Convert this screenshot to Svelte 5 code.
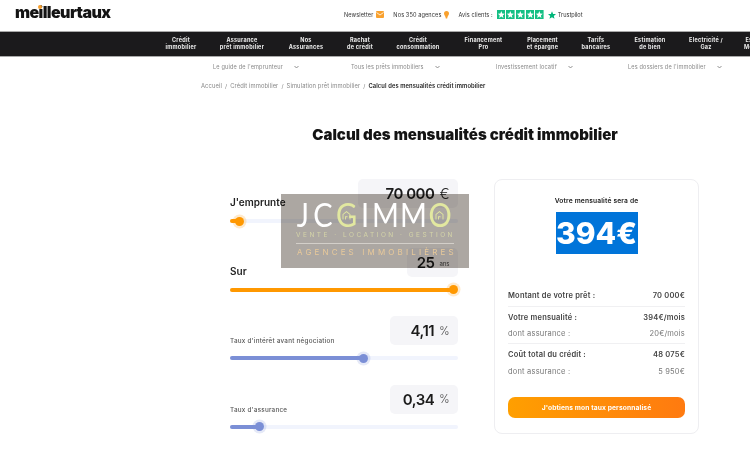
<script>
  const nav = [
    ['Crédit', 'immobilier', 62],
    ['Assurance', 'prêt immobilier', 60],
    ['Nos', 'Assurances', 68],
    ['Rachat', 'de crédit', 40],
    ['Crédit', 'consommation', 76],
    ['Financement', 'Pro', 55],
    ['Placement', 'et épargne', 63],
    ['Tarifs', 'bancaires', 44],
    ['Estimation', 'de bien', 64],
    ['Electricité /', 'Gaz', 48],
    ['Espace', 'Membre', 52]
  ];
  const subnav = ['Le guide de l\'emprunteur', 'Tous les prêts immobiliers', 'Investissement locatif', 'Les dossiers de l\'immobilier'];
  const crumbs = ['Accueil', 'Crédit immobilier', 'Simulation prêt immobilier'];
  const sliders = [
    { label: "J'emprunte", value: '70 000', unit: '€', pct: 4, big: true, color: '#ff9800', vw: 100 },
    { label: 'Sur', value: '25', unit: 'ans', pct: 98, big: true, color: '#ff9800', vw: 51 },
    { label: "Taux d'intérêt avant négociation", value: '4,11', unit: '%', pct: 58.5, big: false, color: '#7b8fd6', vw: 68 },
    { label: "Taux d'assurance", value: '0,34', unit: '%', pct: 13, big: false, color: '#7b8fd6', vw: 68 }
  ];
  const star = 'M5 1.2 6.100 3.900 9 4.100 6.800 6 7.500 8.800 5 7.300 2.500 8.800 3.200 6 1 4.100 3.900 3.900z';
</script>

<header class="top">
  <div class="logo">meilleurtaux<i></i></div>
  <div class="top-links">
    <span class="tl tl1">Newsletter
      <svg width="8" height="7" viewBox="0 0 8 7"><rect width="8" height="7" rx="1" fill="#f9a12e"/><path d="M0.500 1.500 4 4l3.500-2.500" fill="none" stroke="#fff" stroke-width=".8"/></svg>
    </span>
    <span class="tl tl2">Nos 350 agences
      <svg width="5" height="8" viewBox="0 0 5 8"><path d="M2.500 0a2.500 2.500 0 0 1 2.500 2.500C5 4 3.300 5.500 3.200 7.500H1.800C1.700 5.500 0 4 0 2.500A2.500 2.500 0 0 1 2.500 0z" fill="#f9a12e"/></svg>
    </span>
    <span class="tl tl3">Avis clients :</span>
    <span class="stars">
      {#each [1, 2, 3, 4, 5] as s (s)}
        <svg width="8.600" height="9" viewBox="0 0 10 10" preserveAspectRatio="none"><rect width="10" height="10" fill="#14bf84"/><path d={star} fill="#fff"/></svg>
      {/each}
    </span>
    <span class="tp">
      <svg width="8" height="8" viewBox="1 1 8 8"><path d={star} fill="#00b67a"/></svg>
      Trustpilot
    </span>
  </div>
</header>

<nav class="main-nav">
  {#each nav as item (item[0] + item[1])}
    <a href="#top" style="width:{item[2]}px">{item[0]}<br />{item[1]}</a>
  {/each}
</nav>

<div class="subnav">
  {#each subnav as s (s)}
    <span class="sub">{s}
      <svg width="5" height="4" viewBox="0 0 5 4"><path d="M.5 1 2.500 3 4.500 1" fill="none" stroke="#777" stroke-width=".8"/></svg>
    </span>
  {/each}
</div>

<div class="crumbs">
  {#each crumbs as c (c)}
    <span>{c}</span><span class="sep">/</span>
  {/each}
  <strong>Calcul des mensualités crédit immobilier</strong>
</div>

<h1>Calcul des mensualités crédit immobilier</h1>

<main class="calc">
  <section class="sliders">
    {#each sliders as s (s.label)}
      <div class="field">
        <div class="field-top">
          <span class="label" class:big={s.big}>{s.label}</span>
          <span class="value" style="width:{s.vw}px">
            <b>{s.value}</b><small class:ans={s.unit === 'ans'} class:eur={s.unit === '€'}>{s.unit}</small>
          </span>
        </div>
        <div class="track">
          <div class="fill" style="width:{s.pct}%;background:{s.color}"></div>
          <div class="thumb" style="left:{s.pct}%;background:{s.color};box-shadow:0 0 0 2.500px {s.color}33"></div>
        </div>
      </div>
    {/each}
  </section>

  <aside class="card">
    <p class="card-title">Votre mensualité sera de</p>
    <div class="amount">394€</div>
    <div class="rows">
      <div class="row strong r1"><span>Montant de votre prêt :</span><span>70 000€</span></div>
      <div class="row strong r2"><span>Votre mensualité :</span><span>394€/mois</span></div>
      <div class="row r3"><span>dont assurance :</span><span>20€/mois</span></div>
      <div class="row strong r4"><span>Coût total du crédit :</span><span>48 075€</span></div>
      <div class="row r5"><span>dont assurance :</span><span>5 950€</span></div>
    </div>
    <button class="cta">J'obtiens mon taux personnalisé</button>
  </aside>
</main>

<div class="watermark">
  <div class="wm-bg"></div>
  <div class="wm-logo">
    <span class="c-j">J</span><span class="c-c">C</span>
    <span class="lime c-g">G<svg width="11" height="11" viewBox="0 0 11 11"><path d="M2 9V4.500L5.500 2 9 4.500V9M4.500 9V6.500H6.500" fill="none" stroke="#e2e8a0" stroke-width=".9"/></svg></span>
    <span class="c-i">I</span><span class="c-m">M</span><span class="c-m">M</span>
    <span class="lime c-o">O<svg width="11" height="11" viewBox="0 0 11 11"><path d="M2 9V4.500L5.500 2 9 4.500V9M4.500 9V6.500H6.500" fill="none" stroke="#e2e8a0" stroke-width=".9"/></svg></span>
  </div>
  <div class="wm-sub">VENTE · LOCATION · GESTION</div>
  <div class="wm-ag">AGENCES IMMOBILIÈRES</div>
</div>

<style>
  :global(body) {
    margin: 0;
    background: #fff;
    font-family: Inter, "Open Sans", sans-serif;
    color: #111;
    overflow: hidden;
  }

  .top {
    height: 31px;
    position: relative;
  }

  .logo {
    position: absolute;
    left: 15px;
    top: 1px;
    font-size: 16px;
    line-height: 22px;
    font-weight: 900;
    letter-spacing: -0.6px;
    color: #141414;
  }

  .logo i {
    position: absolute;
    left: 23px;
    top: 4px;
    width: 4px;
    height: 4px;
    border-radius: 50%;
    background: #f9a12e;
  }

  .top-links {
    position: absolute;
    left: 344px;
    top: 8.500px;
    display: flex;
    align-items: center;
    font-size: 5.600px;
    letter-spacing: 0.1px;
    line-height: 12px;
    color: #333;
    white-space: nowrap;
  }

  .tl {
    display: flex;
    align-items: center;
    gap: 3px;
  }

  .tl2 { margin-left: 9px; }
  .tl3 { margin-left: 9px; }

  .stars {
    display: flex;
    gap: 1px;
    margin-left: 4px;
  }

  .stars svg,
  .tp svg {
    display: block;
  }

  .tp {
    display: flex;
    align-items: center;
    gap: 2px;
    margin-left: 4px;
    letter-spacing: 0;
  }

  .main-nav {
    height: 24px;
    background: #1b1a1c;
    border-top: 1px solid #a9a9a9;
    border-bottom: 1px solid #a9a9a9;
    display: flex;
    padding-left: 150px;
    overflow: hidden;
  }

  .main-nav a {
    flex: none;
    color: #eee;
    text-decoration: none;
    text-align: center;
    font-size: 5.500px;
    letter-spacing: 0.25px;
    font-weight: 700;
    line-height: 7px;
    padding-top: 5px;
    white-space: nowrap;
  }

  .subnav {
    height: 20px;
    display: grid;
    grid-template-columns: 138px 145px 132px auto;
    padding-left: 213px;
    align-items: center;
    font-size: 5.600px;
    letter-spacing: 0.15px;
    color: #888;
  }

  .sub {
    display: flex;
    gap: 11px;
    align-items: center;
    white-space: nowrap;
  }

  .crumbs {
    padding: 3px 0 0 201px;
    display: flex;
    gap: 3px;
    font-size: 5.800px;
    letter-spacing: 0.1px;
    line-height: 12px;
    color: #888;
    white-space: nowrap;
  }

  .crumbs strong {
    color: #222;
    font-weight: 600;
  }

  h1 {
    margin: 33px 0 0;
    text-align: center;
    width: 930px;
    font-size: 15px;
    line-height: 20px;
    font-weight: 900;
    color: #141414;
  }

  .calc {
    display: flex;
    gap: 36px;
    padding: 34px 0 0 230px;
  }

  .sliders {
    width: 228px;
    flex: none;
  }

  .field {
    height: 68.670px;
  }

  .field-top {
    display: flex;
    justify-content: space-between;
    align-items: flex-end;
    height: 29px;
  }

  .label {
    font-size: 6.300px;
    letter-spacing: 0.25px;
    font-weight: 500;
    color: #555;
    line-height: 10px;
    margin-bottom: -1px;
  }

  .label.big {
    font-size: 10px;
    letter-spacing: 0;
    font-weight: 600;
    color: #222;
    line-height: 14px;
  }

  .value {
    background: #f5f5f8;
    border-radius: 5px;
    height: 29px;
    flex: none;
    display: flex;
    align-items: center;
    justify-content: flex-end;
    padding-right: 8.500px;
    gap: 5px;
    box-sizing: border-box;
  }

  .value b {
    font-size: 15px;
    letter-spacing: -0.5px;
    font-weight: 600;
    color: #1b1b1b;
  }

  .value small {
    font-size: 11px;
    font-weight: 300;
    color: #444;
  }

  .value small.eur {
    font-size: 15px;
    color: #222;
  }

  .value small.ans {
    font-size: 6px;
    font-weight: 400;
    padding-top: 3px;
  }

  .track {
    position: relative;
    height: 4px;
    margin-top: 11px;
    border-radius: 2px;
    background: #f1f4fd;
  }

  .fill {
    height: 100%;
    border-radius: 2px;
  }

  .thumb {
    position: absolute;
    top: -2.500px;
    width: 9px;
    height: 9px;
    margin-left: -4.500px;
    border-radius: 50%;
  }

  .card {
    width: 205px;
    height: 255px;
    flex: none;
    box-sizing: border-box;
    border: 1px solid #eeeef1;
    border-radius: 8px;
    padding: 16px 13px 0;
  }

  .card-title {
    margin: 0;
    text-align: center;
    font-size: 6.700px;
    letter-spacing: 0.15px;
    line-height: 10px;
    font-weight: 600;
    color: #222;
  }

  .amount {
    width: 82px;
    height: 42px;
    margin: 6px auto 0;
    background: #0074d9;
    color: #fff;
    font-size: 30px;
    font-weight: 800;
    line-height: 42px;
    text-align: center;
    white-space: nowrap;
  }

  .rows {
    margin-top: 32px;
  }

  .row {
    display: flex;
    justify-content: space-between;
    align-items: center;
    font-size: 7.500px;
    letter-spacing: 0.2px;
    color: #777;
  }

  .row.strong {
    font-weight: 600;
    color: #444;
  }

  .r1 { height: 18px; margin-bottom: 2px; }
  .r2 { height: 20px; border-top: 1px solid #f0f0f2; }
  .r3 { height: 12px; margin-bottom: 4px; }
  .r4 { height: 20px; border-top: 1px solid #f0f0f2; }
  .r5 { height: 14px; }

  .cta {
    display: block;
    width: 100%;
    height: 21px;
    margin-top: 19px;
    padding: 0;
    border: 0;
    border-radius: 7px;
    background: linear-gradient(90deg, #ff9f00, #ff7a10);
    color: #fff;
    font-family: inherit;
    font-size: 6.700px;
    letter-spacing: 0.1px;
    font-weight: 700;
  }

  .watermark {
    position: absolute;
    left: 281px;
    top: 194px;
    width: 188px;
    height: 74px;
    overflow: hidden;
  }

  .wm-bg {
    position: absolute;
    inset: 0;
    background: #aca7a2;
    mix-blend-mode: multiply;
  }

  .wm-logo {
    position: relative;
    margin: 8px 0 0 14px;
    height: 26px;
    display: flex;
    align-items: center;
    font-family: Lato, sans-serif;
    font-size: 29px;
    line-height: 26px;
    font-weight: 400;
    color: #fff;
    transform: scaleY(1.12);
  }

  .wm-logo span {
    flex: none;
    text-align: center;
  }

  .c-j { width: 16px; }
  .c-c { width: 24px; }
  .c-g { width: 23px; }
  .c-i { width: 14px; }
  .c-m { width: 27px; margin-right: 1px; }
  .c-o { width: 24px; }

  .lime {
    position: relative;
    color: #e2e8a0;
  }

  .lime svg {
    position: absolute;
    left: 6px;
    top: 8px;
  }

  .wm-sub {
    position: relative;
    margin: 2px 15px 0;
    padding-bottom: 3px;
    border-bottom: 1px solid #d3cfc9;
    font-size: 6.500px;
    line-height: 10px;
    letter-spacing: 2.500px;
    color: #d4d4a8;
    white-space: nowrap;
    overflow: hidden;
  }

  .wm-ag {
    position: relative;
    margin: 1px 0 0 16px;
    font-size: 8px;
    line-height: 14px;
    letter-spacing: 3.150px;
    color: #e8c99a;
    white-space: nowrap;
  }
</style>
